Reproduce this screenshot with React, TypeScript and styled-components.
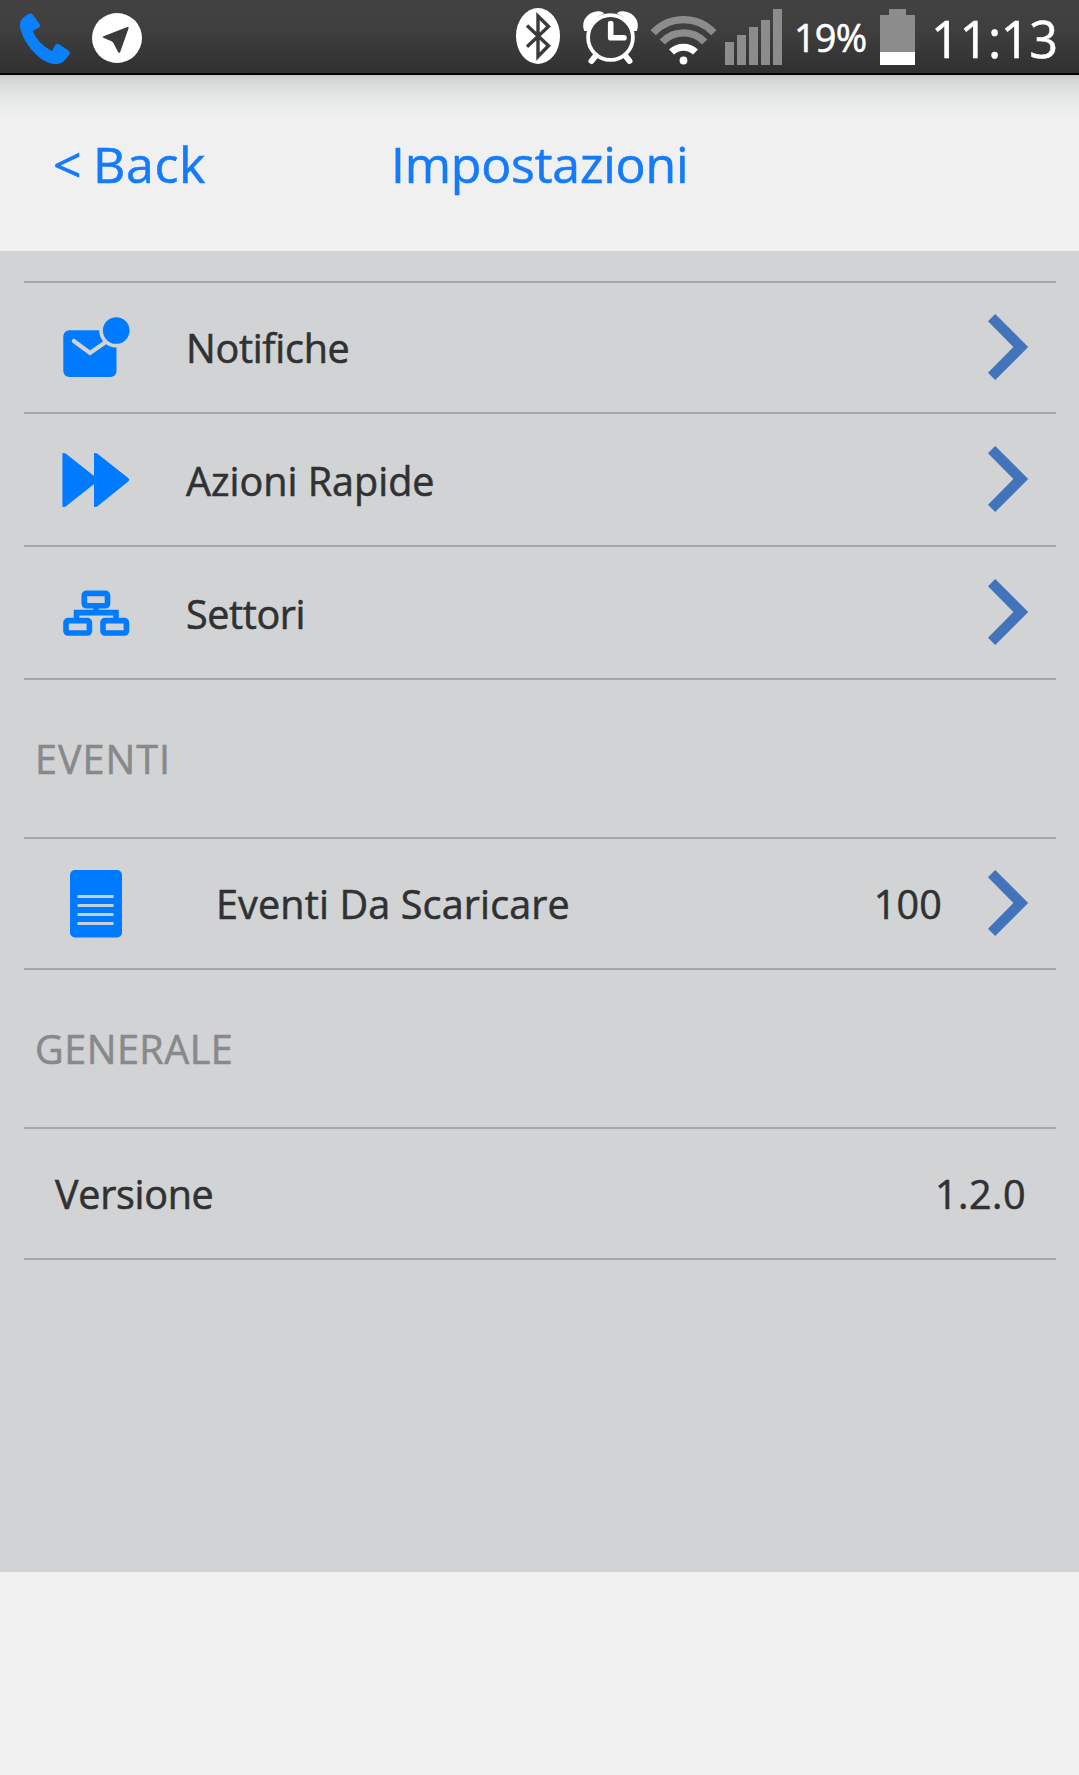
import React from "react";
import styled, { createGlobalStyle } from "styled-components";

const BLUE = "#007bff";

const GlobalStyle = createGlobalStyle`
  html, body {
    margin: 0;
    background: #f0f0f1;
  }
  * { box-sizing: border-box; }
`;

const Screen = styled.div`
  width: 1079px;
  height: 1775px;
  display: flex;
  flex-direction: column;
  overflow: hidden;
  background: #f0f0f1;
  font-family: "Open Sans", "Noto Sans", sans-serif;
  color: #303132;
  -webkit-text-stroke: 0.55px currentColor;
`;

const StatusBar = styled.div`
  flex: none;
  display: flex;
  height: 75px;
  padding-left: 18px;
  background: linear-gradient(#424242, #3f3f3f 40%, #303030);
  border-bottom: 2px solid #000;
  color: #fff;
`;

const StatusIcon = styled.svg<{ $gap?: number }>`
  flex: none;
  display: block;
  margin-left: ${(p) => p.$gap ?? 0}px;
`;

const StatusText = styled.span<{ $size: number; $gap: number; $width: number; $spacing: number; $drop?: number }>`
  flex: none;
  width: ${(p) => p.$width}px;
  margin-left: ${(p) => p.$gap}px;
  padding-top: ${(p) => p.$drop ?? 0}px;
  font-size: ${(p) => p.$size}px;
  line-height: 73px;
  letter-spacing: ${(p) => p.$spacing}px;
  white-space: nowrap;
`;

const Header = styled.header`
  flex: none;
  display: flex;
  height: 176px;
  padding: 49px 0 0 53px;
  background: linear-gradient(#c9c9c9, #d6d7d7 6px, #e2e3e3 18px, #ebecec 32px, #f0f0f1 46px);
  color: #147bfa;
  font-size: 50px;
  line-height: 80px;
  white-space: nowrap;
`;

const BackButton = styled.a`
  width: 338px;
  letter-spacing: 0.7px;
  word-spacing: -3px;
`;

const Title = styled.h1`
  margin: 0;
  font: inherit;
  letter-spacing: -0.2px;
`;

const Settings = styled.main`
  flex: none;
  height: 1321px;
  padding: 30px 23px 0 24px;
  background: #d1d3d4;
`;

const Group = styled.div`
  border-bottom: 2px solid #a5a7a9;
`;

const Row = styled.div<{ $height?: number }>`
  display: flex;
  align-items: center;
  height: ${(p) => p.$height ?? 131}px;
  border-top: 2px solid #a5a7a9;
  font-size: 39.5px;
  line-height: 54px;
  white-space: nowrap;
`;

const SectionTitle = styled.h2`
  display: flex;
  align-items: center;
  height: 157px;
  margin: 0;
  padding-left: 11px;
  color: #88898a;
  font-size: 39.5px;
  font-weight: 400;
  line-height: 54px;
`;

const IconCell = styled.span`
  flex: none;
  display: flex;
  justify-content: center;
  width: 144px;
`;

const Label = styled.span<{ $indent?: number; $spacing?: number; $drop?: number }>`
  flex: 1;
  padding-top: ${(p) => p.$drop ?? 0}px;
  padding-left: ${(p) => p.$indent ?? 18}px;
  letter-spacing: ${(p) => p.$spacing ?? 0}px;
`;

const Value = styled.span<{ $end: number; $spacing: number }>`
  margin-right: ${(p) => p.$end}px;
  letter-spacing: ${(p) => p.$spacing}px;
`;

const Spaced = styled.span<{ $spacing: number }>`
  letter-spacing: ${(p) => p.$spacing}px;
`;

const ChevronIcon = styled.svg`
  flex: none;
  display: block;
  margin-right: 27px;
`;

const Chevron = () => (
  <ChevronIcon width="42" height="67" viewBox="0 0 42 67">
    <path d="M8.200 0 41.200 33 8.200 66 1 58.800 26.400 33 1 7.200Z" fill="#4273bb" />
  </ChevronIcon>
);

const MailIcon = () => (
  <svg width="69" height="61" viewBox="62 317 69 61">
    <rect x="63.300" y="330.200" width="53.200" height="46.800" rx="6" fill={BLUE} />
    <path d="M73.800 341 90 353 105 342.500" fill="none" stroke="#d1d3d4" strokeWidth="4.200" strokeLinecap="round" />
    <circle cx="116.200" cy="330.500" r="17" fill="#d1d3d4" />
    <circle cx="116.200" cy="330.500" r="13.300" fill={BLUE} />
  </svg>
);

const ForwardIcon = () => (
  <svg width="68" height="54" viewBox="62 453 68 54">
    <path d="M62.400 454q0-1 1-1 1.600 0 2.600.8L94 476v-22q0-1 1-1 1.500 0 2.500.8L128.500 478.300q1.500 1.500 0 3L97.500 506.200q-1 .8-2.500.8-1 0-1-1V484L66 506.200q-1 .8-2.600.8-1 0-1-1Z" fill={BLUE} />
  </svg>
);

const SectorsIcon = () => (
  <svg width="68" height="46" viewBox="62 590 68 46">
    <g fill="none" stroke={BLUE} strokeWidth="5.600">
      <rect x="84.300" y="593.400" width="23.200" height="12.400" rx="2" />
      <rect x="66" y="620.600" width="23.400" height="12.400" rx="2" />
      <rect x="103" y="620.600" width="23.400" height="12.400" rx="2" />
      <path d="M96 607v6M76.500 619v-6.400h39.500v6.400" />
    </g>
  </svg>
);

const DocumentIcon = () => (
  <svg width="52" height="68" viewBox="0 0 52 68">
    <rect width="52" height="67.500" rx="5" fill={BLUE} />
    <path d="M7.500 26.500h36M7.500 35.500h36M7.500 44.500h36M7.500 53.500h36" stroke="#c3d1df" strokeWidth="3" />
  </svg>
);

const PhoneStatus = () => (
  <StatusIcon width="54" height="73" viewBox="18 0 54 73">
    <path d="M28 14.200q3-1.800 5 .8L39.500 24q1.500 2.300-.8 3.700l-6 3.400q2.500 6 7 10.900 5.500 6 12.300 9l3.200-5.800q1.600-2.500 4-1l9.200 6.300q2.600 2 .6 4.600l-4 5q-3.500 4.500-10.500 4-9-.5-18.500-9.600-11-10.500-15.300-24.500-2.700-9 3.300-13Z" fill="#0a80fb" />
  </StatusIcon>
);

const LocationStatus = () => (
  <StatusIcon width="52" height="73" viewBox="91 0 52 73" $gap={19}>
    <circle cx="117" cy="38" r="25" fill="#fff" />
    <path d="M103.500 36.200 127.300 27.100q1.500-.4 1.300 1.200L120.200 52q-.8 1.600-2 .2L113.500 43.300q-.8-1.400-2-2L103.300 37.800q-1.200-.9.200-1.600Z" fill="#3b3b3b" />
  </StatusIcon>
);

const BluetoothStatus = () => (
  <StatusIcon width="46" height="73" viewBox="515 0 46 73" $gap={372}>
    <ellipse cx="538" cy="36" rx="22" ry="28" fill="#fff" />
    <path d="M527 25.500 548.500 45.800 538 56.500V16L548.500 26.500 527 46.800" fill="none" stroke="#3b3b3b" strokeWidth="3.400" />
  </StatusIcon>
);

const AlarmStatus = () => (
  <StatusIcon width="56" height="73" viewBox="582 0 56 73" $gap={21}>
    <path d="M598 11.200q4-.3 6.300 2.300-10.500 3.500-16.500 17.500h-3.600q-2.200-5.500.3-11.500Q589 11.700 598 11.200ZM623 11.200q-4-.3-6.300 2.300 10.500 3.500 16.500 17.500h3.600q2.200-5.500-.3-11.500Q632 11.700 623 11.200Z" fill="#fff" />
    <circle cx="610.500" cy="37.500" r="22.400" fill="#3c3c3c" stroke="#fff" strokeWidth="3.800" />
    <path d="M595.500 56 591.500 61M625.500 56 629.500 61" stroke="#fff" strokeWidth="6" strokeLinecap="round" />
    <path d="M610.700 23.500V37.800H624" fill="none" stroke="#fff" strokeWidth="5.600" strokeLinecap="round" strokeLinejoin="round" />
  </StatusIcon>
);

const WifiStatus = () => (
  <StatusIcon width="67" height="73" viewBox="650 0 67 73" $gap={12}>
    <g fill="none" strokeWidth="7.200">
      <path d="M653.200 32.800A41.500 41.500 0 0 1 713.800 32.800" stroke="#8c8c8c" />
      <path d="M662.300 42A29 29 0 0 1 704.700 42" stroke="#8c8c8c" />
      <path d="M671.500 52A17.500 17.500 0 0 1 695.500 52" stroke="#fff" />
    </g>
    <circle cx="683.500" cy="60.500" r="3.900" fill="#fff" />
  </StatusIcon>
);

const SignalStatus = () => (
  <StatusIcon width="57" height="73" viewBox="725 0 57 73" $gap={8}>
    <path d="M725 42h9v23h-9zM737 35h9v30h-9zM749 27h9v38h-9zM761 20h9v45h-9zM773 9h9v56h-9z" fill="#8c8c8c" />
  </StatusIcon>
);

const BatteryStatus = () => (
  <StatusIcon width="35" height="73" viewBox="880 0 35 73">
    <path d="M880 15h9V9h17v6h9v37h-35z" fill="#8c8c8c" />
    <path d="M880 52h35v13h-35z" fill="#fff" />
  </StatusIcon>
);

const links = [
  { label: "Notifiche", Icon: MailIcon, height: 131, spacing: -0.3, drop: 0 },
  { label: "Azioni Rapide", Icon: ForwardIcon, height: 133, spacing: 0, drop: 3 },
  { label: "Settori", Icon: SectorsIcon, height: 133, spacing: -0.4, drop: 3 },
];

export default function App() {
  return (
    <>
      <GlobalStyle />
      <Screen>
        <StatusBar>
          <PhoneStatus />
          <LocationStatus />
          <BluetoothStatus />
          <AlarmStatus />
          <WifiStatus />
          <SignalStatus />
          <StatusText $size={38} $gap={12} $width={86} $spacing={-0.9} $drop={1}>19%</StatusText>
          <BatteryStatus />
          <StatusText $size={50.5} $gap={16} $width={138} $spacing={-0.4} $drop={2}>11:13</StatusText>
        </StatusBar>
        <Header>
          <BackButton>&lt; Back</BackButton>
          <Title>Impostazioni</Title>
        </Header>
        <Settings>
          <Group>
            {links.map(({ label, Icon, height, spacing, drop }) => (
              <Row key={label} $height={height}>
                <IconCell><Icon /></IconCell>
                <Label $spacing={spacing} $drop={drop}>{label}</Label>
                <Chevron />
              </Row>
            ))}
          </Group>
          <SectionTitle><Spaced $spacing={1}>EVENTI</Spaced></SectionTitle>
          <Group>
            <Row>
              <IconCell><DocumentIcon /></IconCell>
              <Label $indent={48} $spacing={0.15}>Eventi Da Scaricare</Label>
              <Value $end={45} $spacing={0.2}>100</Value>
              <Chevron />
            </Row>
          </Group>
          <SectionTitle><Spaced $spacing={0.5}>GENERALE</Spaced></SectionTitle>
          <Group>
            <Row>
              <Label $indent={31} $spacing={-0.3}>Versione</Label>
              <Value $end={30} $spacing={0.5}>1.2.0</Value>
            </Row>
          </Group>
        </Settings>
      </Screen>
    </>
  );
}
